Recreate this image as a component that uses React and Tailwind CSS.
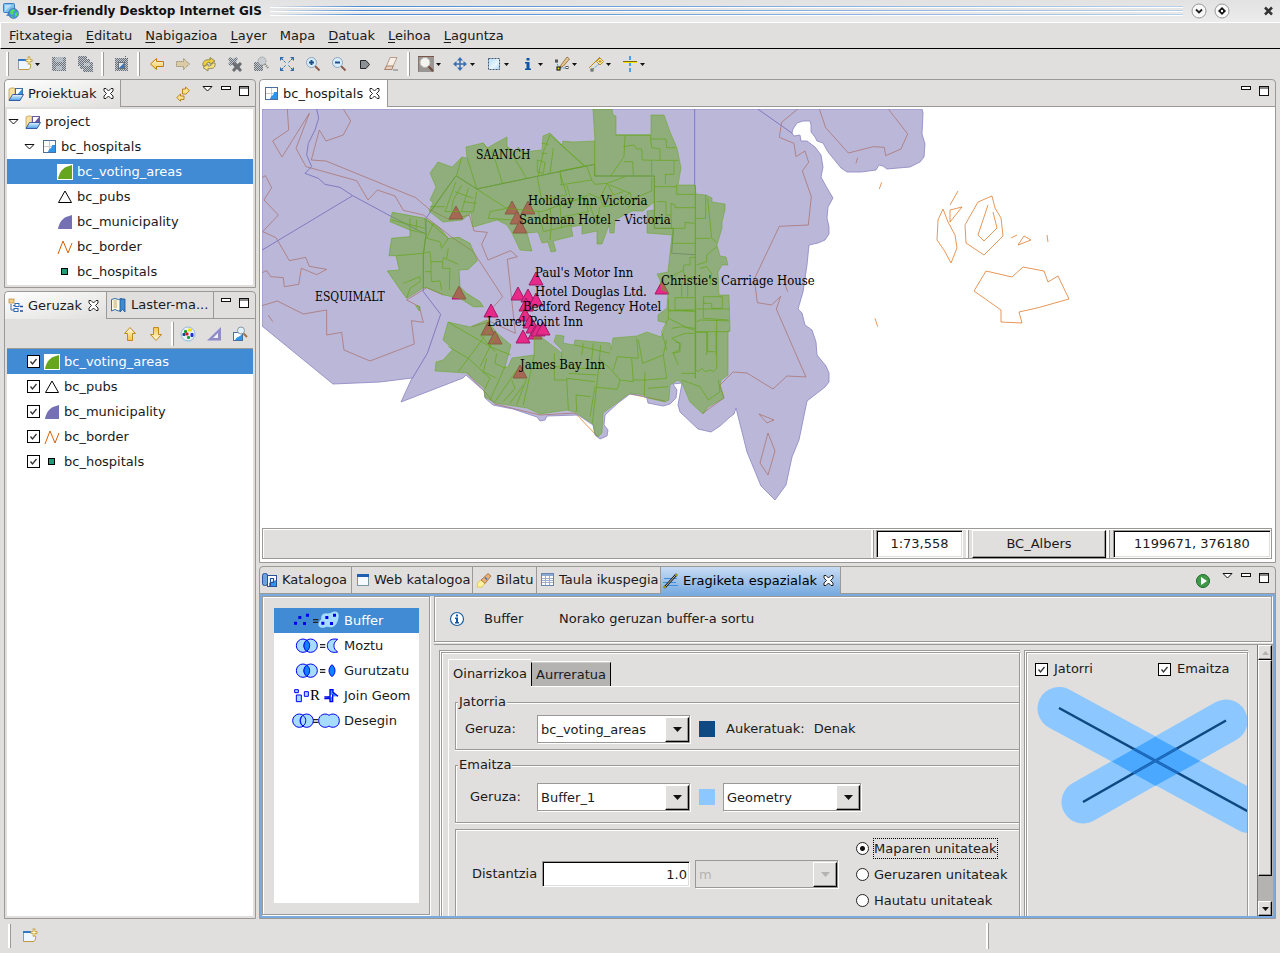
import React, { useState } from "react";

/* ---------- map geometry ---------- */

const LAND =
  "M262,109 H922 L923,113 922,134 925,144 924,157 920,162 910,167 887,169 883,166 879,165 876,170 861,172 847,172 841,168 828,152 823,143 817,141 815,137 811,132 811,125 810,121 803,121 797,123 793,129 792,133 794,136 800,135 801,141 807,141 815,147 821,155 823,167 821,177 827,188 833,198 828,207 827,218 829,227 829,234 825,240 818,243 809,245 807,265 803,292 798,309 802,313 805,325 812,330 816,342 817,355 826,366 829,373 829,382 825,387 807,401 799,440 792,457 786,485 775,500 761,486 747,452 736,408 734,414 730,417 720,426 711,432 698,429 680,412 678,405 682,383 673,384 677,390 676,398 670,404 663,406 648,403 647,398 642,396 630,394 618,403 605,415 604,425 608,430 607,436 600,439 595,435 593,425 578,415 547,416 545,420 540,421 537,417 513,409 493,405 485,398 484,391 466,375 463,378 401,402 412,378 380,382 333,384 262,326 Z";

const NORTH_GREEN =
  "M430,173 L438,162 452,167 462,157 467,158 466,147 483,143 487,148 507,137 507,147 517,152 518,147 523,152 542,150 543,136 550,133 562,145 563,141 573,142 595,141 593,109 612,109 613,115 616,116 616,135 651,135 651,115 664,115 670,132 677,148 681,168 678,185 695,185 696,194 706,195 712,198 712,202 725,204 725,210 722,222 722,228 717,245 720,256 726,257 728,265 722,265 718,272 719,295 729,295 730,331 728,331 728,375 721,380 720,385 724,398 715,403 708,407 703,414 690,402 682,383 678,380 670,385 669,400 665,402 648,398 645,395 630,393 603,413 602,433 598,437 595,433 593,424 575,412 567,410 540,414 527,408 495,403 485,397 484,388 467,373 435,371 436,362 443,360 453,349 443,340 448,322 470,327 487,320 497,333 511,345 505,367 508,367 512,358 534,355 534,337 541,337 562,353 562,350 554,342 556,335 564,336 563,343 574,345 575,340 610,343 611,350 613,338 637,336 647,332 661,337 667,323 658,321 658,315 667,308 668,292 662,290 660,280 657,274 668,272 672,235 647,233 647,211 655,210 654,202 643,211 632,211 615,220 614,233 610,233 609,225 602,244 597,244 597,231 582,234 582,225 571,227 573,236 553,241 556,251 551,252 548,242 542,243 538,232 527,233 532,251 520,250 512,233 507,225 497,220 473,227 471,213 462,220 443,222 429,211 433,203 430,200 436,187 Z";

const ESQUIMALT_GREEN =
  "M397,322 L495,340 540,370 565,400 597,397 630,415 652,467 625,493 597,495 600,545 620,565 660,590 670,605 640,605 600,580 552,570 500,548 490,548 440,580 425,560 382,498 418,495 408,452 387,452 395,400 450,395 450,375 390,350 Z M467,602 L480,605 478,618 Z";

const WEST_PARCELS =
  "M588,212 L510,320 M588,212 L650,252 975,183 M622,160 L650,250 M605,157 L590,212 M695,130 L727,235 M668,113 L700,150 M742,125 L800,220 M870,90 L975,183 M870,90 L850,140 835,210 M845,115 L866,118 M845,145 H862 M832,165 L855,172 850,205 832,200Z M880,130 L870,205 M832,216 L845,283 920,270 900,203 M650,252 L740,310 757,295 M740,310 L690,320 685,340 757,345 M588,230 L555,320 640,320 650,260 M605,240 L580,285 575,315 M625,250 L605,318 M585,260 L640,280 M510,305 H555 M610,290 L650,295 M740,310 L845,320 985,270 M835,320 L850,380 935,360 M870,310 L875,345 870,405 M900,300 L905,370 M395,345 L495,370 M450,340 V375 L495,385 M470,345 L468,375 M495,340 L498,388 490,450 V548 M520,355 L500,400 540,410 545,430 565,400 M410,452 L490,445 M490,445 L510,440 513,470 H548 L550,458 595,478 M513,470 V500 H495 M548,470 V490 H570 L568,555 M513,500 L515,530 540,528 545,555 M440,580 L450,550 480,530 V515 L430,535 M500,345 L565,400 M565,430 L560,460";

const EAST_PARCELS =
  "M0,117 L75,185 M0,198 L104,178 M104,107 V213 H283 M168,90 H272 M195,92 L192,155 152,213 M190,125 L222,120 230,132 H245 L247,165 300,166 355,166 M272,90 V102 H318 L320,128 H347 M272,102 L275,128 300,132 V166 M192,170 H218 L220,210 M275,166 V210 M342,166 V208 H316 V238 M283,213 V370 H375 V352 L404,355 M283,245 H348 L350,240 V268 H406 M290,290 L318,290 V330 H333 V295 L345,300 V308 H406 M333,330 L335,370 M340,370 L337,415 H404 M437,270 V340 H408 M443,280 L455,400 470,413 M408,400 H450 M470,425 L440,450 V470 L410,480 M404,457 H390 V480 H372 L370,495 325,520 M370,495 L375,520 404,515 M345,578 V615 H404 M345,578 H404 M365,530 V575 M383,540 V575 M430,575 H487 V610 H455 V595 H432 Z M410,612 H510 M410,650 L420,645 508,648 M325,618 L400,615 M325,640 L385,670 404,675 M325,580 V640 L305,680 320,735 M410,680 H440 V750 M440,680 H508 M468,680 V750 M335,700 L375,685 H404 M335,700 L360,715 358,735 335,745 M420,490 L440,485 455,505 450,540 M0,240 L95,225 80,182 M5,240 L0,200 M20,240 L35,290 10,305 M95,225 L105,238 142,235 195,215 M142,235 L120,280 85,265 M142,235 L160,270 190,260 M120,280 L130,305 165,300 210,262 215,280 205,310 M275,220 V258 L210,285 M150,240 L210,265 M30,290 L75,280 85,320 10,335 M90,300 L110,360 120,305";

const SOUTH_PARCELS =
  "M205,67 L330,140 M335,80 L265,175 205,140 M265,175 L235,215 M350,100 L300,200 M330,140 L392,165 M300,105 L345,155 M265,175 L330,235 315,265 M320,175 L310,215 350,235 M350,160 L345,190 375,205 M375,200 L330,300 M410,210 L345,305 M395,240 L405,265 370,305 M430,255 L390,310 M440,235 L410,315 M463,165 L430,315 M523,160 V240 H560 M523,200 H545 V160 M560,235 L565,330 M560,235 L645,245 M565,220 L650,225 M567,205 L655,205 M583,135 L690,160 M610,130 L605,165 M640,130 L635,180 M662,135 L655,215 637,370 M645,260 L630,350 M650,262 L712,268 720,240 690,205 655,175 M700,210 L712,170 775,175 770,115 M775,120 L788,190 850,165 M755,175 L760,245 720,240 M795,215 L793,290 M860,120 L850,165 860,235 795,240 M760,240 H795 M590,335 L588,285 632,290 M803,265 L865,260 M875,85 L905,80 945,85 M885,125 L900,130 V155 L880,160 895,195 M905,220 H945 M947,0 V210 L955,215 965,205 975,215 990,210 1000,215 1010,205 V60 M947,97 H983 V155 H1005 M970,0 V55 L1045,60 M905,240 L960,260 985,300 1020,275 1015,240 M862,30 L947,35";

const BORDER_WEST =
  "M82,12 L86,75 38,108 66,156 148,25 108,130 138,185 290,227 324,285 352,255 405,273 430,316 490,330 580,400 640,440 728,575 692,615 M250,12 L272,48 250,90 198,108 178,75 154,165 198,168 467,278 508,313 570,345 628,330 642,378 682,382 665,418 684,465 752,437 772,455 742,463 766,685 692,650 635,665 M6,218 L16,212 35,248 12,285 55,330 8,380 48,398 88,467 137,457 148,484 200,493 170,509 124,490 116,538 73,545 70,518 32,515 20,497 6,503 M6,602 L52,588 130,627 200,615 V690 L245,682 252,735 330,768 463,717 454,647 490,652 478,605 440,585 500,548 550,570 M25,630 L38,650";

const BORDER_EAST =
  "M778,12 L797,68 865,144 940,125 973,127 977,152 1023,132 1043,87 985,12 M713,12 L665,52 658,97 702,115 708,155 735,138 746,172 727,198 754,275 745,360 658,364 583,522 592,593 635,600 662,574 649,612 708,748 738,816 681,813 639,852 561,804 519,801 480,840 492,879 429,924 M893,158 L888,175 M965,232 L958,252 M945,640 L953,665 M676,540 L683,560";

const BORDER_MISC =
  "M759,414 L774,420 767,423 Z M768,433 L775,451 768,475 760,463 Z M943,209 L938,220 937,240 944,250 951,263 957,248 955,235 948,222 Z M978,202 L992,196 995,208 1001,218 1003,236 984,255 966,243 965,225 Z M988,205 L978,235 984,241 997,228 993,212 M974,291 L986,271 1012,277 1023,267 1044,271 1048,282 1058,276 1069,299 1037,308 1019,312 1022,323 1001,322 1001,310 Z M1011,238 L1017,235 M1018,245 L1024,236 1031,240 Z M950,205 L958,191 M950,210 L962,207 950,222 Z M1047,235 L1048,242 M467,373 L485,392 495,404 540,415 575,413 598,437 M630,394 L665,401";

const PUBS = [
  [456, 206], [459, 286], [512, 201], [528, 201], [517, 211], [520, 220],
  [536, 272], [518, 287], [528, 289], [536, 293], [526, 298], [491, 304],
  [525, 308], [530, 315], [533, 320], [488, 322], [495, 331], [523, 330],
  [535, 326], [538, 323], [543, 322], [520, 365], [662, 281],
];

const LABELS = [
  ["SAANICH", 476, 159],
  ["Holiday Inn Victoria", 528, 205],
  ["Sandman Hotel – Victoria", 519, 224],
  ["Paul's Motor Inn", 535, 277],
  ["Christie's Carriage House", 661, 285],
  ["Hotel Douglas Ltd.", 535, 296],
  ["ESQUIMALT", 315, 301],
  ["Bedford Regency Hotel", 523, 311],
  ["Laurel Point Inn", 487, 326],
  ["James Bay Inn", 520, 369],
];

function MapView() {
  const west = "translate(260 105) scale(.33333)";
  const east = "translate(560 105) scale(.33333)";
  const south = "translate(380 300) scale(.33333)";
  return (
    <svg className="block shrink-0" width="1012" height="419" viewBox="262 109 1012 419" role="img" aria-label="bc_hospitals">
      <g fill="none" stroke="#d95f02" strokeOpacity=".65">
        <path d={BORDER_WEST} transform={west} strokeWidth="3" />
        <path d={BORDER_EAST} transform={east} strokeWidth="3" />
        <path d={BORDER_MISC} />
      </g>
      <path d={LAND} fill="#7570b3" fillOpacity=".5" stroke="#8a86c2" strokeOpacity=".8" />
      <g fill="none" stroke="#7f7abf" strokeWidth="3">
        <path transform={west} d="M170,12 L176,40 165,75 145,115 140,150 155,185 135,205 175,220 195,238 240,247 278,272 395,335 498,388 490,450 490,560 542,628 502,745 457,820 M278,272 L5,436 M498,388 L498,340 588,212 650,252 1004,178" />
        <path transform={east} d="M404,12 V240 M593,12 L697,85 M104,178 V213 H283 V370 H340 L335,445 406,449" />
      </g>
      <g fill="#e7298a" stroke="#a31a68">
        {PUBS.map(([x, y]) => (
          <path key={x + "-" + y} d={`M${x},${y} L${x + 7},${y + 13} H${x - 7} Z`} />
        ))}
      </g>
      <path d={NORTH_GREEN} fill="#66a61e" fillOpacity=".5" stroke="#66a61e" strokeOpacity=".5" />
      <path d={ESQUIMALT_GREEN} transform={west} fill="#66a61e" fillOpacity=".5" stroke="#66a61e" strokeOpacity=".6" strokeWidth="3" />
      <g fill="none" stroke="#66a61e" strokeOpacity=".75" strokeWidth="3">
        <path d={WEST_PARCELS} transform={west} />
        <path d={EAST_PARCELS} transform={east} />
        <path d={SOUTH_PARCELS} transform={south} />
        <path d="M406,240 V820" transform={east} strokeWidth="4" />
      </g>
      <g className="font-['DejaVu_Serif_Condensed','DejaVu_Serif',serif]" fill="#000">
        {LABELS.map(([t, x, y]) => (
          <text key={t} x={x} y={y} className={t === t.toUpperCase() ? "text-xs" : "text-[13px]"}>{t}</text>
        ))}
      </g>
    </svg>
  );
}

/* ---------- icons ---------- */

function Svg({ w = 16, h = 16, children, className = "" }) {
  return (
    <svg width={w} height={h} viewBox={`0 0 ${w} ${h}`} className={"block shrink-0 " + className} aria-hidden="true">
      {children}
    </svg>
  );
}

const Dither = () => (
  <svg width="0" height="0" className="absolute" aria-hidden="true">
    <defs>
      <pattern id="dither" width="2" height="2" patternUnits="userSpaceOnUse">
        <rect width="2" height="2" fill="#c4c8cc" />
        <rect width="1" height="1" fill="#69717a" />
        <rect x="1" y="1" width="1" height="1" fill="#69717a" />
      </pattern>
      <linearGradient id="gold" x1="0" y1="0" x2="0" y2="1">
        <stop offset="0" stopColor="#fffbe0" />
        <stop offset="1" stopColor="#f3c650" />
      </linearGradient>
      <linearGradient id="blueFold" x1="0" y1="0" x2="0" y2="1">
        <stop offset="0" stopColor="#eaf6ff" />
        <stop offset="1" stopColor="#4aa0e8" />
      </linearGradient>
      <linearGradient id="sky" x1="0" y1="0" x2="1" y2="1">
        <stop offset="0" stopColor="#b4dcf8" />
        <stop offset=".6" stopColor="#e8f6ff" />
        <stop offset="1" stopColor="#a8d4f4" />
      </linearGradient>
    </defs>
  </svg>
);

const Caret = () => <Svg w={5} h={3}><path d="M0,0 H5 L2.5,3 Z" fill="#111" /></Svg>;

const AppIcon = () => (
  <Svg>
    <rect x=".5" y=".5" width="11" height="9" rx="1" fill="#7fc0ee" stroke="#3b7fc0" />
    <path d="M2,2 H9 L2,8 Z" fill="#b5e0fa" />
    <path d="M3,13 L5,10 H9 V13 Z" fill="#5d8fc4" />
    <circle cx="10.5" cy="10.5" r="5" fill="#4a8fe0" stroke="#2b62a8" strokeWidth=".6" />
    <path d="M8,7 L11,6 12,8 10,9 11,11 9,12 7,10 Z M12,10 L15,9 14,13 12,14 Z M9,13 L11,15 8,14 Z" fill="#4ee05a" />
  </Svg>
);
const NewWizard = () => (
  <Svg>
    <path d="M1.5,3 V13.500 H12 C13.500,12 14,10 13.500,7 L9,4" fill="#eef6ff" />
    <path d="M1.500,3 V13.500" stroke="#8a9cb0" />
    <path d="M1.500,13.500 H12 C13.500,12 14,10 13.500,8" fill="none" stroke="#c09a40" />
    <rect x="1" y="3" width="8" height="2" fill="#2f78c8" />
    <path d="M12,.5 V8.500 M8.500,4.500 H15.500" stroke="#c09a30" strokeWidth="2.600" />
    <path d="M12,1.500 V7.500 M9.500,4.500 H14.500" stroke="#fff6c0" strokeWidth="1.200" />
  </Svg>
);
const Save = () => (
  <Svg>
    <path d="M1,1 H15 V15 H2 L1,14 Z" fill="url(#dither)" />
    <rect x="4" y="1" width="8" height="5" fill="#c9d3dc" opacity=".6" />
    <rect x="5" y="10" width="6" height="4" fill="#c9d3dc" opacity=".6" />
  </Svg>
);
const SaveAll = () => (
  <Svg>
    <path d="M1,0 H10 V3 H13 V6 H16 V16 H6 V13 H3 V10 H1 Z" fill="url(#dither)" />
    <rect x="7" y="7" width="6" height="3" fill="#d0d8e0" opacity=".6" />
  </Svg>
);
const Snapshot = () => (
  <Svg>
    <path d="M2,2 H15 V15 H2 Z" fill="url(#dither)" />
    <rect x="5.500" y="6.500" width="6" height="6" fill="#dfe6ec" stroke="#6a7178" />
    <path d="M6,12 L11,7 V12 Z" fill="#3c76b8" />
    <path d="M12.500,0 V5 M10,2.500 H15" stroke="#555c64" strokeDasharray="1 1" />
  </Svg>
);
const ArrowH = ({ right, off }) => (
  <Svg className={right ? "rotate-180" : ""}>
    <path d="M1.500,8 L7.500,2.500 V5.500 H14.500 V10.500 H7.500 V13.500 Z" fill={off ? "#d8cba6" : "url(#gold)"} stroke={off ? "#8a7a58" : "#c07c10"} strokeDasharray={off ? "1 1" : "none"} />
  </Svg>
);
const ArrowV = ({ down }) => (
  <Svg className={down ? "rotate-180" : ""}>
    <path d="M8,1.500 L13.500,7.500 H10.500 V14.500 H5.500 V7.500 H2.500 Z" fill="url(#gold)" stroke="#c08a1c" />
  </Svg>
);
const Refresh = () => (
  <Svg>
    <path d="M2,10 C1,5 5,3 9,4 V1.500 L14,5 9,8.500 V6.500 C6,6 5,8 5,10 Z" fill="#f0cf3c" stroke="#7d764a" strokeWidth=".8" />
    <path d="M14,7 C15,12 11,13 7,12.500 V15 L2,11.500 7,8 V10 C10,10.500 11,9 11,7 Z" fill="#f7e27a" stroke="#7d764a" strokeWidth=".8" />
  </Svg>
);
const Stop = () => (
  <Svg>
    <path d="M1,3 L3,1 6,3 9,1 11,3 9,6 11,8 9,10 6,8 3,10 1,8 3,6 Z" fill="url(#dither)" />
    <path d="M5,8 L7,6 10,8.500 13,6 15,8 12.500,11 15,14 13,16 10,13 7,16 5,14 7.500,11 Z" fill="#6a6e73" />
  </Svg>
);
const LayerZoomOff = () => (
  <Svg>
    <path d="M1,6 H6 L10,9 V15 H1 Z" fill="url(#dither)" />
    <circle cx="9" cy="5" r="4" fill="#c9ced2" stroke="#8b8f93" strokeDasharray="1 1" />
    <path d="M12,8 L15,12" stroke="#7d7468" strokeWidth="2" strokeDasharray="1 1" />
  </Svg>
);
const Extent = () => (
  <Svg>
    <g stroke="#2f6fb0" fill="#2f6fb0">
      <path d="M3,3 L7,7 M13,3 L9,7 M3,13 L7,9 M13,13 L9,9" strokeDasharray="2 1" />
      <path d="M1,1 H5 L1,5 Z M15,1 H11 L15,5 Z M1,15 H5 L1,11 Z M15,15 H11 L15,11 Z" stroke="none" />
    </g>
  </Svg>
);
const Zoom = ({ plus }) => (
  <Svg>
    <path d="M10,10 L14.500,14.500" stroke="#8d5c48" strokeWidth="2" />
    <circle cx="6.500" cy="6.500" r="5" fill="#d9eefb" stroke="#8aa4be" />
    <path d={plus ? "M4,6.500 H9 M6.500,4 V9" : "M4,6.500 H9"} stroke="#1d4f8c" strokeWidth="2" />
  </Svg>
);
const Tag = () => <Svg><path d="M3.500,4.500 H9 L12.500,8.500 9,12.500 H3.500 Z" fill="#8d9196" stroke="#23272c" /></Svg>;
const Eraser = () => (
  <Svg>
    <path d="M7,1.500 L14,1.500 9,12.500 H2.500 Z" fill="#f6efe6" stroke="#b59a88" />
    <path d="M3.500,10 H10 L9,13.500 H1.500 Z" fill="#e8cfc0" stroke="#a8816b" />
    <path d="M10,14 H15" stroke="#777" />
  </Svg>
);
const ZoomTool = () => (
  <Svg>
    <rect width="16" height="16" fill="#9a9694" />
    <path d="M0,15.500 V.5 H16" fill="none" stroke="#7a564a" />
    <path d="M10,10 L15,15" stroke="#74483c" strokeWidth="2" />
    <circle cx="7" cy="6.500" r="5" fill="#f5f5f0" stroke="#b8b4ae" />
  </Svg>
);
const Pan = () => (
  <Svg>
    <path d="M8,3 V13 M3,8 H13" stroke="#3a6fb0" strokeWidth="1.500" />
    <path d="M8,1 L11,4.500 H5 Z M8,15 L11,11.500 H5 Z M1,8 L4.500,5 V11 Z M15,8 L11.500,5 V11 Z" fill="#3a6fb0" />
  </Svg>
);
const Select = () => (
  <Svg>
    <rect x="2.500" y="2.500" width="11" height="11" fill="url(#sky)" stroke="#44566e" strokeDasharray="2 1" />
  </Svg>
);
const Info = () => <Svg><path d="M6.500,2 H9.500 V4.500 H6.500 Z M5,6 H9.500 V12.500 H11 V14 H5 V12.500 H6.500 V7.500 H5 Z" fill="#0d56a6" /></Svg>;
const EditGeom = () => (
  <Svg>
    <path d="M2.500,5 L4.500,12 H12" fill="none" stroke="#4a9ce0" strokeDasharray="2 1" />
    <path d="M7,9 L13,1 15.500,3 9,10.500 6,11.500 Z" fill="#e6c68c" stroke="#8a6434" strokeWidth=".8" />
    <rect x="1.500" y="4" width="2" height="2" fill="#fff" stroke="#555" />
    <rect x="3" y="11" width="3" height="3" fill="#f5e800" stroke="#000" />
    <rect x="12" y="10.500" width="2" height="2" fill="#fff" stroke="#555" />
  </Svg>
);
const AddPoint = () => (
  <Svg>
    <path d="M1,12 L12,1" stroke="#b88a20" />
    <path d="M5,13 L13,6" stroke="#4a9ce0" strokeDasharray="2 1" />
    <path d="M12,2 L15.500,5.500 12,9 8.500,5.500 Z" fill="#fff0a8" stroke="#b88a20" />
    <path d="M12,4 V7 M10.500,5.500 H13.500" stroke="#b88a20" />
    <rect x="3" y="13" width="2" height="2" fill="#ddd" stroke="#555" />
  </Svg>
);
const Split = () => (
  <Svg>
    <path d="M8,0 V16" stroke="#4aa0e8" strokeWidth="2" strokeDasharray="4 2" />
    <path d="M1,5.500 H15" stroke="#7a6a10" />
    <path d="M1,6.500 H15" stroke="#f4e400" />
  </Svg>
);
const CloseX = () => (
  <Svg w={11} h={11}>
    <path d="M1,.5 H3 L5.500,3 8,.5 H10 V3 L7.500,5.500 10,8 V10.500 H8 L5.500,8 3,10.500 H1 V8 L3.500,5.500 1,3 Z" fill="#fff" stroke="#111" strokeWidth=".9" />
  </Svg>
);
const MenuTri = () => <Svg w={11} h={6}><path d="M1,.5 H10 L5.500,5 Z" fill="#fff" stroke="#111" /></Svg>;
const MinIcon = () => <Svg w={10} h={4}><rect x=".5" y=".5" width="9" height="3" fill="#fff" stroke="#111" /></Svg>;
const MaxIcon = () => (
  <Svg w={10} h={10}>
    <rect x=".5" y=".5" width="9" height="9" fill="#fff" stroke="#111" />
    <path d="M0,2 H10" stroke="#111" />
  </Svg>
);
const Link = () => (
  <Svg w={14}>
    <path d="M13.500,4.500 L9.500,1 V3 H6.500 V8 H9.500 V8.500 Z" fill="#fbe28c" stroke="#b47a14" strokeWidth=".9" />
    <path d="M.8,11.500 L4.500,8 V10 H8 V13.500 H4.500 V15.300 Z" fill="#fbe28c" stroke="#b47a14" strokeWidth=".9" />
  </Svg>
);
const Folder = ({ purple }) => (
  <Svg>
    <path d="M1,3 L3,2 H6 L7,3 V14 H1 Z" fill="#f7e0a0" stroke="#b99542" strokeWidth=".7" />
    <rect x="7.500" y="2.500" width="7" height="7" fill="#fff" stroke={purple ? "#6b5b9c" : "#3f6d9c"} />
    <path d="M9,9 L14,3 V9 Z" fill={purple ? "#6b5b9c" : "#2f95e8"} />
    <path d="M1,14.500 L4.500,8.500 H15.500 L12,14.500 Z" fill="url(#blueFold)" stroke="#2c4fa0" strokeWidth=".9" />
  </Svg>
);
const MapIcon = () => (
  <Svg w={14} h={14}>
    <rect x=".5" y=".5" width="12" height="12" fill="#fff" stroke="#4a6f9c" />
    <path d="M6.500,1 V12 M1,6.500 H12" stroke="#c5ccd4" />
    <path d="M5,12 C6,8 9,9 9,5 L12,5 V12 Z" fill="#2f95e8" />
  </Svg>
);
const Poly = ({ fill, framed }) => (
  <Svg>
    {framed && <rect width="16" height="16" fill="#fff" />}
    <path d="M1,15 C2,9 5,5 9,3 L15,1 V15 Z" fill={fill} />
  </Svg>
);
const Tri = () => <Svg><path d="M8,2 L14.500,13.500 H1.500 Z" fill="#fff" stroke="#000" /></Svg>;
const Line = () => <Svg><path d="M1,15 L6,2 11,14 15,4" fill="none" stroke="#d95f02" /></Svg>;
const Dot = () => <Svg><rect x="4.500" y="4.500" width="6" height="6" fill="#1b9e77" stroke="#000" /></Svg>;

const LayersIcon = () => (
  <Svg>
    <rect x="1" y="1" width="5" height="4" fill="#f2cf86" stroke="#b58a3a" strokeWidth=".7" />
    <path d="M3,6 V12 H6 M5,7.500 H8" fill="none" stroke="#4a6f9c" />
    <rect x="7" y="5.500" width="4" height="3" fill="#fff" stroke="#2c6bb0" />
    <rect x="6" y="10.500" width="4" height="3" fill="#fff" stroke="#2c6bb0" />
    <path d="M12,8.500 H15 M12,13 H15" stroke="#1f4d90" strokeWidth="1.500" />
  </Svg>
);
const Book = () => (
  <Svg>
    <path d="M.5,2.500 L4,1.500 7.500,2.500 11,1.500 V12.500 L7.500,14 4,12.500 .5,14 Z" fill="#fff8dc" stroke="#2f6da8" />
    <path d="M2.500,4 H6 M2.500,6 H6 M2.500,8 H6 M2.500,10 H6" stroke="#b8a878" />
    <path d="M9,2 H14 V15 L11.500,12.500 9,15 Z" fill="#3f8ad0" stroke="#1d5796" strokeWidth=".8" />
  </Svg>
);
const Palette = () => (
  <Svg>
    <ellipse cx="8" cy="8" rx="7" ry="7" fill="#e8f0fa" stroke="#9ab8d8" />
    <rect x="8" y="2.500" width="4" height="3" rx="1" fill="#f0e000" />
    <rect x="2.500" y="7" width="3" height="3" rx="1" fill="#104a88" />
    <rect x="4" y="4" width="3" height="3" rx="1" fill="#1a9a2e" />
    <rect x="10.500" y="7" width="3" height="4" rx="1" fill="#1a30e0" />
    <rect x="5.500" y="6.500" width="3" height="3" rx="1" fill="#e01818" />
    <rect x="7" y="10" width="3" height="3" rx="1" fill="#18a040" />
  </Svg>
);
const Ruler = () => (
  <Svg>
    <path d="M1,14.500 L15,1 V14.500 Z" fill="#8f8cc8" />
    <path d="M7,12 L12,7 V12 Z" fill="#f2f2fa" />
  </Svg>
);
const ZoomLayer = () => (
  <Svg>
    <rect x="1.500" y="6.500" width="9" height="8" fill="#fff" stroke="#4a6f9c" />
    <path d="M3,14 C5,10 8,11 10,8 V14 Z" fill="#2f95e8" />
    <path d="M11,7 L15,11" stroke="#9c7048" strokeWidth="2" />
    <circle cx="9" cy="4.500" r="3.500" fill="#e4f0fa" stroke="#8898a8" />
  </Svg>
);
const Catalog = () => (
  <Svg>
    <rect x=".5" y="1.500" width="5" height="12" rx="2" fill="#6fa0e0" stroke="#2a52a0" />
    <rect x="5.500" y="3.500" width="9" height="11" fill="#fff" stroke="#2a4f98" />
    <path d="M7,14 V11 L14,8 V14 Z" fill="#2f95e8" />
    <path d="M8.500,14 V6.500 H11.500 V10.500 H8.500" stroke="#2a4f98" fill="none" strokeWidth="1.200" />
  </Svg>
);
const Browser = () => (
  <Svg w={13} h={13}>
    <rect x=".5" y=".5" width="11" height="11" fill="#f4faff" stroke="#7a98a8" />
    <rect width="12" height="3" fill="#1f5fb0" />
  </Svg>
);
const Torch = () => (
  <Svg>
    <path d="M1,15 L2,10 6,8 9,11 6,15 Z" fill="#fff2a0" stroke="#e0c040" strokeWidth=".8" />
    <path d="M5,8 L12,1.500 15,4 9,11.500 Z" fill="#e8b078" stroke="#a06a30" strokeWidth=".8" />
    <path d="M9,5.500 L11,7.500" stroke="#3a6fb0" strokeWidth="1.500" />
  </Svg>
);
const Grid = () => (
  <Svg w={14} h={14}>
    <rect x=".5" y=".5" width="12" height="12" fill="#fff" stroke="#6d86ac" />
    <rect x="1" y="1" width="11" height="2" fill="#8da8d0" />
    <path d="M1,5.500 H12 M1,7.500 H12 M1,9.500 H12 M4.500,3 V12 M8.500,3 V12" stroke="#9aaed0" />
  </Svg>
);
const SpatialOp = () => (
  <Svg>
    <path d="M1,5.500 H14 M0,9.500 H13 M2,12.500 H15" stroke="#3f8ee0" />
    <path d="M2,14 L13,2" stroke="#111" strokeWidth="2.500" />
    <path d="M2.500,13.500 L12.500,2.500" stroke="#f4f0d0" strokeWidth=".8" />
    <path d="M1,13 h2 v2 h-2 Z M12,1 h2 v2 h-2 Z" fill="#f0e800" stroke="#333" strokeWidth=".5" />
  </Svg>
);
const Run = () => (
  <Svg>
    <circle cx="8" cy="8" r="6.500" fill="#3f9a48" stroke="#1d6a2a" />
    <path d="M6,4 L12,8 6,12 Z" fill="#fff" />
  </Svg>
);
const InfoCircle = () => (
  <Svg>
    <circle cx="8" cy="8" r="6.500" fill="#fff" stroke="#1d5fa0" strokeWidth="1.200" />
    <path d="M7,3.500 H9 V5.500 H7 Z M6,6.500 H9 V11 H10 V12.500 H6 V11 H7 V8 H6 Z" fill="#0d56a6" />
  </Svg>
);

function OpIcon({ kind }) {
  const s = { stroke: "#0000f0", strokeWidth: 3 };
  const eq = (x) => <path d={`M${x},35 h16 M${x},43 h16`} stroke="#222" strokeWidth="4" />;
  const venn = (
    <g {...s}>
      <circle cx="87" cy="38" r="20" fill="#a6dcff" />
      <circle cx="110" cy="38" r="20" fill="#a6dcff" />
      <path d="M98,21 C110,30 110,46 98,55 C87,46 87,30 98,21 Z" fill="#0a84ff" />
    </g>
  );
  return (
    <svg width="70" height="25" viewBox="0 0 210 75" className="block shrink-0" aria-hidden="true">
      {kind === "buffer" && (
        <g>
          <path d="M60,41 h9 v9 h-9 Z M73,24 h9 v9 h-9 Z M87,42 h9 v9 h-9 Z M96,17 h9 v9 h-9 Z" fill="#0000f0" />
          {eq(117)}
          <path d="M133,50 C133,42 138,38 142,34 C140,24 146,15 158,16 C166,18 170,14 176,12 C186,8 196,14 194,26 C192,38 190,48 178,56 C168,60 160,54 154,58 C144,62 134,58 133,50 Z" fill="#a6dcff" />
          <path d="M142,41 h9 v9 h-9 Z M154,24 h9 v9 h-9 Z M168,42 h9 v9 h-9 Z M177,17 h9 v9 h-9 Z" fill="#0000f0" />
        </g>
      )}
      {kind === "clip" && (
        <g>
          {venn}
          {eq(138)}
          <path d="M191,19 C168,14 160,28 160,38 C160,50 170,62 191,57 C176,48 176,28 191,19 Z" fill="#a6dcff" {...s} />
        </g>
      )}
      {kind === "intersect" && (
        <g>
          {venn}
          {eq(138)}
          <path d="M174,20 C186,30 186,46 174,56 C162,46 162,30 174,20 Z" fill="#0a84ff" {...s} />
        </g>
      )}
      {kind === "join" && (
        <g>
          <path d="M62,20 h11 v9 h-11 Z M67,36 h15 v20 h-15 Z M91,26 h12 v14 h-12 Z" fill="#a6dcff" {...s} />
          <text x="108" y="50" className="font-['Liberation_Serif',serif] text-[45px]" fill="#000">R</text>
          <path d="M151,42 H168 V20 H177 V28 L192,40 M151,47 H168 V56 H176 V34" fill="#3a9cff" {...s} strokeWidth="4" />
        </g>
      )}
      {kind === "union" && (
        <g>
          <g fill="#a6dcff" {...s}>
            <circle cx="76" cy="38" r="20" />
            <circle cx="98" cy="38" r="20" />
            <path d="M87,22 C98,30 98,46 87,54 C77,46 77,30 87,22 Z" />
          </g>
          {eq(117)}
          <path d="M165,22 C156,14 134,18 134,38 C134,58 156,62 165,54 C174,62 196,58 196,38 C196,18 174,14 165,22 Z" fill="#a6dcff" {...s} />
        </g>
      )}
    </svg>
  );
}

/* ---------- shared widgets ---------- */

const etched = "border border-[#9a9996] shadow-[inset_1px_1px_0_#fff,1px_1px_0_#fff]";
const raised = "border border-b-black border-l-white border-r-black border-t-white bg-[#e0dfde] shadow-[inset_-1px_-1px_0_#9a9996]";
const sunken = "border border-b-white border-l-[#9a9996] border-r-white border-t-[#9a9996] bg-white text-[#1a1a1a] shadow-[inset_1px_1px_0_#000,inset_-1px_-1px_0_#e0dfde]";

function Sep({ className = "h-6" }) {
  return <span className={"w-[3px] shrink-0 border-l-2 border-r border-l-white border-r-[#9a9996] " + className} />;
}

function ViewButtons({ label }) {
  return (
    <>
      <button aria-label={"Minimize " + label}><MinIcon /></button>
      <button aria-label={"Maximize " + label}><MaxIcon /></button>
    </>
  );
}

function Check({ id }) {
  const [on, setOn] = useState(true);
  return (
    <span className="inline-grid size-[13px] shrink-0 place-items-center">
      <input
        id={id}
        type="checkbox"
        checked={on}
        onChange={() => setOn(!on)}
        className="size-[13px] appearance-none border border-black bg-white [grid-area:1/1]"
      />
      {on && (
        <Svg w={9} h={9} className="pointer-events-none [grid-area:1/1]">
          <path d="M1.500,4.500 L3.500,7 7.500,2" fill="none" stroke="#333" strokeWidth="1.300" />
        </Svg>
      )}
    </span>
  );
}

function Combo({ id, label, value, width, disabled }) {
  return (
    <span className={"inline-grid h-7 shrink-0 border border-[#9a9996] shadow-[1px_1px_0_#fff] " + width + (disabled ? " bg-[#e0dfde]" : " bg-white")}>
      <select
        id={id}
        aria-label={label}
        disabled={disabled}
        defaultValue={value}
        className={"w-full appearance-none bg-transparent pl-[3px] pr-6 pt-px opacity-100 [grid-area:1/1] " + (disabled ? "text-[#b4b3b1]" : "text-[#1a1a1a]")}
      >
        <option>{value}</option>
      </select>
      <span className={"pointer-events-none mt-px grid w-6 place-items-center justify-self-end [grid-area:1/1] " + raised}>
        <Svg w={9} h={5}><path d="M0,0 H9 L4.500,5 Z" fill={disabled ? "#b4b3b1" : "#111"} /></Svg>
      </span>
    </span>
  );
}

/* ---------- window chrome ---------- */

function TitleBar() {
  return (
    <header className="flex h-[22px] shrink-0 items-center bg-gradient-to-b from-[#e2e2e2] to-[#ececec] pl-[3px] pr-[3px] text-[#111]">
      <AppIcon />
      <h1 className="ml-2 text-xs font-bold">User-friendly Desktop Internet GIS</h1>
      <span className="mx-2 flex flex-1 flex-col gap-[2px]">
        {[0, 1, 2].map((i) => (
          <span key={i} className="h-[2px] border-b border-white bg-gradient-to-r from-transparent via-[#4a8ad4] via-10% to-[#b8cfe8]" />
        ))}
      </span>
      <span className="flex items-center gap-[7px]">
        <button aria-label="Shade">
          <Svg><circle cx="8" cy="8" r="7" fill="#f8f8f8" stroke="#999" /><path d="M5,6.500 L8,9.500 11,6.500" fill="none" stroke="#222" strokeWidth="1.800" /></Svg>
        </button>
        <button aria-label="Maximize window">
          <Svg><circle cx="8" cy="8" r="7" fill="#f8f8f8" stroke="#999" /><path d="M8,4 L12,8 8,12 4,8 Z" fill="#111" /><circle cx="8" cy="8" r="1.200" fill="#fff" /></Svg>
        </button>
        <button aria-label="Close window" className="ml-6">
          <Svg><path d="M4,4.500 L11,11.500 M11,4.500 L4,11.500" stroke="#333" strokeWidth="2.500" /></Svg>
        </button>
      </span>
    </header>
  );
}

const MENUS = ["Fitxategia", "Editatu", "Nabigazioa", "Layer", "Mapa", "Datuak", "Leihoa", "Laguntza"];

function MenuBar() {
  return (
    <nav className="flex h-[27px] shrink-0 items-center gap-[13px] border-b border-l border-t border-b-black border-l-white border-t-white pl-2">
      {MENUS.map((m) => (
        <button key={m}>
          {m === "Mapa" ? m : <><span className="underline underline-offset-2">{m[0]}</span>{m.slice(1)}</>}
        </button>
      ))}
    </nav>
  );
}

function Tool({ label, icon, drop }) {
  return (
    <button aria-label={label} className={"flex shrink-0 items-center gap-[2px] " + (drop ? "w-[34px]" : "w-[26px]")}>
      {icon}
      {drop && <Caret />}
    </button>
  );
}

function ToolBar() {
  return (
    <div role="toolbar" className="flex h-[30px] shrink-0 items-center pl-[6px]">
      <Sep />
      <span className="flex pl-2">
        <Tool label="New" icon={<NewWizard />} drop />
        <Tool label="Save" icon={<Save />} />
        <Tool label="Save all" icon={<SaveAll />} />
      </span>
      <Sep className="-ml-[2px] h-6" />
      <span className="flex pl-[9px]"><Tool label="Snapshot" icon={<Snapshot />} /></span>
      <Sep className="-ml-[2px] h-6" />
      <span className="flex pl-[9px]">
        <Tool label="Back" icon={<ArrowH />} />
        <Tool label="Forward" icon={<ArrowH right off />} />
        <Tool label="Refresh" icon={<Refresh />} />
        <Tool label="Stop" icon={<Stop />} />
        <Tool label="Zoom to layer" icon={<LayerZoomOff />} />
        <Tool label="Zoom to extent" icon={<Extent />} />
        <Tool label="Zoom in" icon={<Zoom plus />} />
        <Tool label="Zoom out" icon={<Zoom />} />
        <Tool label="Tag" icon={<Tag />} />
        <Tool label="Clear" icon={<Eraser />} />
      </span>
      <Sep className="-ml-[2px] h-6" />
      <span className="flex pl-2">
        <Tool label="Zoom tool" icon={<ZoomTool />} drop />
        <Tool label="Pan tool" icon={<Pan />} drop />
        <Tool label="Select tool" icon={<Select />} drop />
        <Tool label="Info tool" icon={<Info />} drop />
        <Tool label="Edit geometry" icon={<EditGeom />} drop />
        <Tool label="Add vertex" icon={<AddPoint />} drop />
        <Tool label="Split" icon={<Split />} drop />
      </span>
    </div>
  );
}

function Panel({ className = "", header, children }) {
  return (
    <section className={"flex min-h-0 flex-col rounded-t-[4px] border border-[#9a9996] " + className}>
      <div className="flex h-[27px] shrink-0">{header}</div>
      {children}
    </section>
  );
}

const tabRest = "flex flex-1 items-start justify-end gap-2 border-b border-[#9a9996] pr-[6px] pt-[6px]";

/* ---------- left column ---------- */

const LAYERS = [
  ["bc_voting_areas", <Poly key="v" fill="#66a61e" framed />],
  ["bc_pubs", <Tri key="p" />],
  ["bc_municipality", <Poly key="m" fill="#7570b3" />],
  ["bc_border", <Line key="b" />],
  ["bc_hospitals", <Dot key="h" />],
];

function Projects() {
  return (
    <Panel
      className="h-[209px] shrink-0"
      header={
        <>
          <button className="flex w-[116px] items-center gap-1 rounded-tl-[4px] border-r border-[#9a9996] bg-gradient-to-br from-white to-[#e0dfde] pl-[3px]">
            <Folder />Proiektuak<span className="ml-[2px]"><CloseX /></span>
          </button>
          <div className={tabRest}>
            <button aria-label="Link with editor" className="mr-1"><Link /></button>
            <button aria-label="View menu"><MenuTri /></button>
            <ViewButtons label="Proiektuak" />
          </div>
        </>
      }
    >
      <div className="m-[2px] flex-1 bg-white">
        <ul role="tree" className="[&>li]:flex [&>li]:h-[25px] [&>li]:items-center [&>li]:gap-1">
          <li role="treeitem" className="pl-[1px]"><MenuTri /><span className="ml-[2px]"><Folder purple /></span>project</li>
          <li role="treeitem" className="pl-[17px]"><MenuTri /><span className="ml-[4px]"><MapIcon /></span>bc_hospitals</li>
          {LAYERS.map(([name, icon], i) => (
            <li key={name} role="treeitem" className={"pl-[50px] " + (i === 0 ? "bg-[#418ad4] text-white" : "")}>{icon}{name}</li>
          ))}
        </ul>
      </div>
    </Panel>
  );
}

function LayerList() {
  return (
    <Panel
      className="flex-1"
      header={
        <>
          <button className="flex w-[102px] items-center gap-1 rounded-tl-[4px] border-r border-[#9a9996] bg-gradient-to-br from-white to-[#e0dfde] pl-[3px]">
            <LayersIcon />Geruzak<span className="ml-[2px]"><CloseX /></span>
          </button>
          <button className="flex w-[107px] items-center gap-1 whitespace-nowrap border-b border-r border-[#9a9996] pl-1"><Book />Laster-ma...</button>
          <div className={tabRest}><ViewButtons label="Geruzak" /></div>
        </>
      }
    >
      <div className="mx-[2px] flex h-[30px] shrink-0 items-center justify-end gap-[10px] border-b border-[#9a9996] pr-[5px]">
        <button aria-label="Move up"><ArrowV /></button>
        <button aria-label="Move down"><ArrowV down /></button>
        <Sep className="-mr-1 ml-[-3px] h-6" />
        <button aria-label="Style"><Palette /></button>
        <button aria-label="Measure"><Ruler /></button>
        <button aria-label="Zoom to layer"><ZoomLayer /></button>
      </div>
      <ul className="mx-[2px] mb-[2px] flex-1 bg-white">
        {LAYERS.map(([name, icon], i) => (
          <li key={name} className={"flex h-[25px] items-center pl-5 " + (i === 0 ? "bg-[#418ad4] text-white" : "")}>
            <Check id={"layer-" + name} />
            <label htmlFor={"layer-" + name} className="ml-1 flex items-center gap-1">{icon}{name}</label>
          </li>
        ))}
      </ul>
    </Panel>
  );
}

/* ---------- map editor ---------- */

function MapEditor() {
  return (
    <Panel
      className="flex-1"
      header={
        <>
          <button className="flex w-[128px] items-center rounded-tl-[4px] border-r border-[#9a9996] bg-white pl-[5px]">
            <MapIcon /><span className="ml-1">bc_hospitals</span><span className="ml-[6px]"><CloseX /></span>
          </button>
          <div className={tabRest}><ViewButtons label="bc_hospitals" /></div>
        </>
      }
    >
      <div className="flex min-h-0 flex-1 flex-col bg-white px-[2px] pb-[3px] pt-[2px]">
        <div className="min-h-0 flex-1 overflow-hidden"><MapView /></div>
        <div className="mr-[1px] flex h-[31px] shrink-0 items-center justify-end border border-[#9a9996] bg-[#e0dfde] shadow-[inset_1px_1px_0_#fff]">
          <Sep className="mr-[2px] h-7" />
          <input aria-label="Scale" defaultValue="1:73,558" className={"h-7 w-[87px] text-center " + sunken} />
          <Sep className="mx-[3px] h-7" />
          <button className={"h-7 w-[134px] pt-px " + raised}>BC_Albers</button>
          <Sep className="ml-[1px] mr-[3px] h-7" />
          <input aria-label="Coordinates" defaultValue="1199671, 376180" className={"h-7 w-[158px] text-center " + sunken} />
        </div>
      </div>
    </Panel>
  );
}

/* ---------- operations view ---------- */

const VIEW_TABS = [
  ["Katalogoa", <Catalog key="c" />, "w-[92px] pl-[2px]"],
  ["Web katalogoa", <Browser key="w" />, "w-[121px] pl-[5px]"],
  ["Bilatu", <Torch key="t" />, "w-[64px] pl-[3px]"],
  ["Taula ikuspegia", <Grid key="g" />, "w-[124px] pl-[4px]"],
];

const OPS = [
  ["Buffer", "buffer"],
  ["Moztu", "clip"],
  ["Gurutzatu", "intersect"],
  ["Join Geom", "join"],
  ["Desegin", "union"],
];

function Preview() {
  return (
    <svg width="220" height="236" viewBox="1027 680 220 236" className="block" role="img" aria-label="Buffer">
      <defs>
        <clipPath id="cross"><path d="M1155.300,736.700 L1200.300,761 1155.300,785.700 1111.700,761.500 Z" /></clipPath>
      </defs>
      <g stroke="#8dc7ff" strokeWidth="43" strokeLinecap="round">
        <path d="M1059,708.500 L1249,811.500" />
        <path d="M1083,802 L1226,721" />
      </g>
      <path d="M1155.300,736.700 L1200.300,761 1155.300,785.700 1111.700,761.500 Z" fill="#4aa8ff" />
      <g stroke="#0f4880" strokeWidth="2.500">
        <path d="M1059,708 L1249,812" />
        <path d="M1083,802 L1226,720.500" />
      </g>
      <g stroke="#1c6cc2" strokeWidth="2.500" clipPath="url(#cross)">
        <path d="M1059,708 L1249,812" />
        <path d="M1083,802 L1226,720.500" />
      </g>
    </svg>
  );
}

function Radio({ id, label, on, pick }) {
  return (
    <span className="flex h-[26px] items-center gap-1">
      <input
        id={id}
        name="unit"
        type="radio"
        checked={on}
        onChange={pick}
        className="size-[13px] appearance-none rounded-full border border-[#222] bg-white checked:bg-[radial-gradient(#111_2px,#fff_3px)]"
      />
      <label htmlFor={id} className={"whitespace-nowrap border border-dotted pt-px leading-[18px] " + (on ? "border-black" : "border-transparent")}>{label}</label>
    </span>
  );
}

const UNITS = ["Maparen unitateak", "Geruzaren unitateak", "Hautatu unitateak"];

function BufferForm() {
  const [unit, setUnit] = useState(0);
  const box = "min-w-0 border-[#9a9996] shadow-[inset_1px_1px_0_#fff,0_1px_0_#fff]";
  return (
    <div className="flex h-full flex-col pl-[6px] pt-[6px]">
      <div role="tablist" className="flex h-7 shrink-0">
        <button role="tab" aria-selected="true" className="w-[83px] border-l border-t border-white">Oinarrizkoa</button>
        <div className="flex flex-1 items-end border-b border-white">
          <button role="tab" aria-selected="false" className="h-6 w-[80px] border-l border-r border-t border-l-black border-r-black border-t-[#cfcecc] bg-[#b4b3b1] shadow-[0_-2px_0_-1px_#fff]">Aurreratua</button>
        </div>
      </div>
      <div className="flex-1 border-l border-white pl-[6px] pt-[7px]">
        <fieldset className={"h-14 border border-r-0 " + box}>
          <legend className="ml-[2px] h-4 bg-[#e0dfde] px-px leading-4">Jatorria</legend>
          <div className="flex items-center pl-[9px] pt-[5px]">
            <label htmlFor="source" className="w-[72px] leading-[18px]">Geruza:</label>
            <Combo id="source" value="bc_voting_areas" width="w-[153px]" />
            <span className="ml-[9px] size-4 bg-[#104a82]" />
            <span className="ml-[11px] leading-[18px]">Aukeratuak:</span>
            <span className="ml-[9px] leading-[18px]">Denak</span>
          </div>
        </fieldset>
        <fieldset className={"mt-[7px] h-[66px] border border-r-0 " + box}>
          <legend className="ml-[2px] h-4 bg-[#e0dfde] px-px leading-4">Emaitza</legend>
          <div className="flex items-center pl-[14px] pt-[10px]">
            <label htmlFor="target" className="w-[67px] leading-[18px]">Geruza:</label>
            <Combo id="target" value="Buffer_1" width="w-[153px]" />
            <span className="ml-[9px] size-4 bg-[#8dc7ff]" />
            <span className="ml-2 flex"><Combo label="Geometry type" value="Geometry" width="w-[138px]" /></span>
          </div>
        </fieldset>
        <div className={"mt-[6px] flex h-[90px] items-start border-l border-t pl-4 pt-[5px] " + box}>
          <div className="flex h-[78px] items-center">
            <label htmlFor="distance" className="w-[70px] leading-[18px]">Distantzia</label>
            <input id="distance" defaultValue="1.0" className={"h-[26px] w-[148px] pr-[2px] text-right " + sunken} />
            <span className="ml-[5px] flex"><Combo label="Unit" value="m" width="w-[143px]" disabled /></span>
            <div className="ml-[18px] flex flex-col">
              {UNITS.map((u, i) => (
                <Radio key={u} id={"unit-" + i} label={u} on={unit === i} pick={() => setUnit(i)} />
              ))}
            </div>
          </div>
        </div>
      </div>
    </div>
  );
}

const scrollBtn = "grid h-[15px] shrink-0 place-items-center " + raised;

function Operations() {
  return (
    <Panel
      className="h-[353px] shrink-0"
      header={
        <>
          {VIEW_TABS.map(([name, icon, size]) => (
            <button key={name} className={"flex shrink-0 items-center gap-1 whitespace-nowrap border-b border-r border-[#9a9996] " + size}>{icon}{name}</button>
          ))}
          <button className="flex w-[180px] shrink-0 items-center gap-1 whitespace-nowrap border-r border-[#9a9996] bg-gradient-to-b from-[#c8dcf4] to-[#79abe0] pl-[2px] text-black">
            <SpatialOp />Eragiketa espazialak<span className="ml-[2px]"><CloseX /></span>
          </button>
          <div className={tabRest}>
            <button aria-label="Run" className="mr-[3px]"><Run /></button>
            <button aria-label="View menu"><MenuTri /></button>
            <ViewButtons label="Eragiketa espazialak" />
          </div>
        </>
      }
    >
      <div className="flex min-h-0 flex-1 gap-1 border-2 border-[#79abe0]">
        <div className={"mb-px w-[168px] shrink-0 py-[11px] pl-[11px] pr-[10px] " + etched}>
          <ul role="listbox" className="h-full bg-white">
            {OPS.map(([name, kind], i) => (
              <li key={name} role="option" aria-selected={i === 0} className={"flex h-[25px] items-center whitespace-nowrap " + (i === 0 ? "bg-[#418ad4] text-white" : "")}>
                <OpIcon kind={kind} />{name}
              </li>
            ))}
          </ul>
        </div>
        <div className="flex min-w-0 flex-1 flex-col">
          <div className={"mb-[2px] mr-px flex h-[46px] shrink-0 items-center pl-[14px] leading-[18px] " + etched}>
            <InfoCircle />
            <span className="ml-[19px] w-[75px]">Buffer</span>
            <span>Norako geruzan buffer-a sortu</span>
          </div>
          <div className="flex min-h-0 flex-1 overflow-hidden border-t border-[#9a9996] pl-[5px]">
            <div className="mt-[5px] flex min-h-0 flex-1 gap-1">
              <div className="min-w-0 flex-1 border-l border-t border-[#9a9996] bg-white pl-px pt-px">
                <div className={"h-full overflow-hidden border-b-0 bg-[#e0dfde] " + etched}><BufferForm /></div>
              </div>
              <div className="w-[224px] shrink-0 border-l border-t border-[#9a9996] bg-white pl-px pt-px">
                <div className={"h-full overflow-hidden border-b-0 bg-[#e0dfde] " + etched}>
                  <div className="flex items-center pb-[3px] pl-2 pt-2">
                    <span className="flex w-[123px] items-center gap-[6px]"><Check id="show-source" /><label htmlFor="show-source">Jatorri</label></span>
                    <span className="flex items-center gap-[6px]"><Check id="show-target" /><label htmlFor="show-target">Emaitza</label></span>
                  </div>
                  <Preview />
                </div>
              </div>
            </div>
            <div className="ml-[9px] flex w-4 shrink-0 flex-col border-l border-[#777] bg-[#b4b3b1] pr-px">
              <button aria-label="Scroll up" className={scrollBtn}><Svg w={7} h={4}><path d="M0,4 H7 L3.500,0 Z" fill="#b4b3b1" /></Svg></button>
              <div className={"mb-[25px] flex-1 " + raised} />
              <button aria-label="Scroll down" className={scrollBtn}><Svg w={7} h={4}><path d="M0,0 H7 L3.500,4 Z" fill="#111" /></Svg></button>
            </div>
          </div>
        </div>
      </div>
    </Panel>
  );
}

/* ---------- page ---------- */

export default function App() {
  return (
    <div className="flex h-screen flex-col overflow-hidden bg-[#e0dfde] font-['DejaVu_Sans',sans-serif] text-[13px] leading-4 text-[#1a1a1a]">
      <Dither />
      <TitleBar />
      <MenuBar />
      <ToolBar />
      <main className="flex min-h-0 flex-1 gap-[3px] px-1">
        <div className="flex w-[252px] shrink-0 flex-col gap-[3px]">
          <Projects />
          <LayerList />
        </div>
        <div className="flex min-w-0 flex-1 flex-col gap-[3px]">
          <MapEditor />
          <Operations />
        </div>
      </main>
      <footer className="flex h-[34px] shrink-0 items-center pl-2">
        <Sep className="h-6" />
        <button aria-label="New" className="ml-[11px]"><NewWizard /></button>
        <span className="flex-1" />
        <Sep className="mr-[291px] h-[26px]" />
      </footer>
    </div>
  );
}
